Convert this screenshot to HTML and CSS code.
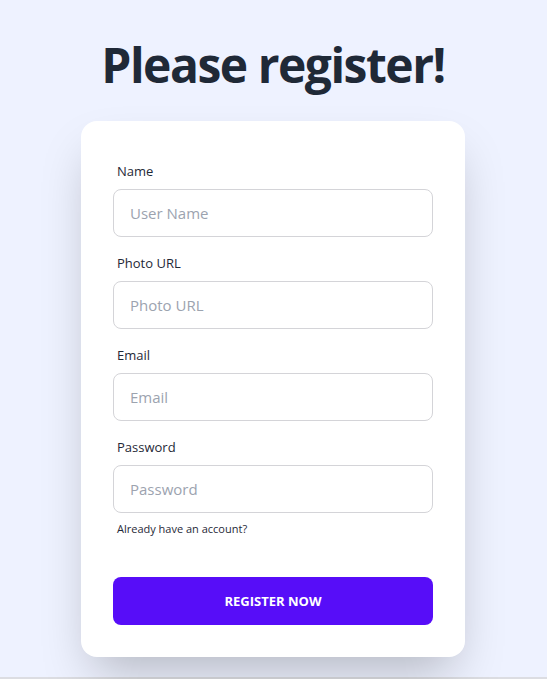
FILE: index.html
```html
<!DOCTYPE html>
<html lang="en">
<head>
<meta charset="utf-8">
<title>Register</title>
<link rel="stylesheet" href="styles.css">
</head>
<body>
<section class="hero">
  <h1 class="title">Please register!</h1>
  <form class="card">
    <div class="field">
      <label class="label">Name</label>
      <input class="input" type="text" placeholder="User Name">
    </div>
    <div class="field">
      <label class="label">Photo URL</label>
      <input class="input" type="text" placeholder="Photo URL">
    </div>
    <div class="field">
      <label class="label">Email</label>
      <input class="input" type="email" placeholder="Email">
    </div>
    <div class="field">
      <label class="label">Password</label>
      <input class="input" type="password" placeholder="Password">
      <label class="label-alt"><a class="alt-link">Already have an account?</a></label>
    </div>
    <button class="btn" type="button">Register Now</button>
  </form>
</section>
<div class="bottom-strip"></div>
</body>
</html>
```
FILE: styles.css
```css
* { box-sizing: border-box; }
html, body { margin: 0; padding: 0; }
body {
  font-family: "Open Sans", "Noto Sans", sans-serif;
  background: #eef2ff;
  overflow: hidden;
}
.hero {
  height: 677px;
  display: flex;
  flex-direction: column;
  align-items: center;
  padding-top: 41px;
  padding-right: 1px;
  background: #eef2ff;
}
.title {
  margin: 0 0 32px;
  font-size: 48px;
  line-height: 48px;
  font-weight: 700;
  color: #1f2937;
  letter-spacing: -1.5px;
}
.card {
  width: 384px;
  background: #fff;
  border-radius: 16px;
  padding: 32px;
  box-shadow: 0 25px 50px -12px rgba(0,0,0,0.25);
  display: flex;
  flex-direction: column;
  position: relative;
  z-index: 1;
}
.field {
  display: flex;
  flex-direction: column;
  margin-bottom: 8px;
}
.field:last-of-type { margin-bottom: 0; }
.label {
  display: block;
  padding: 8px 4px;
  font-size: 13px;
  line-height: 20px;
  color: #1f2937;
}
.label-alt {
  display: block;
  padding: 8px 4px;
  font-size: 11px;
  line-height: 16px;
  height: 32px;
}
.alt-link {
  color: #1f2937;
}
.input {
  height: 48px;
  width: 100%;
  border: 1px solid #d4d4d8;
  border-radius: 8px;
  padding: 0 16px;
  font-family: inherit;
  font-size: 15px;
  color: #1f2937;
  background: #fff;
  outline: none;
}
.input::placeholder { color: #9ca3af; }
.btn {
  margin-top: 32px;
  height: 48px;
  border: none;
  border-radius: 8px;
  background: #570df8;
  color: #fff;
  font-family: inherit;
  font-weight: 700;
  font-size: 13px;
  text-transform: uppercase;
  cursor: pointer;
}
.bottom-strip {
  height: 2px;
  background: #dcdde2;
}
```
